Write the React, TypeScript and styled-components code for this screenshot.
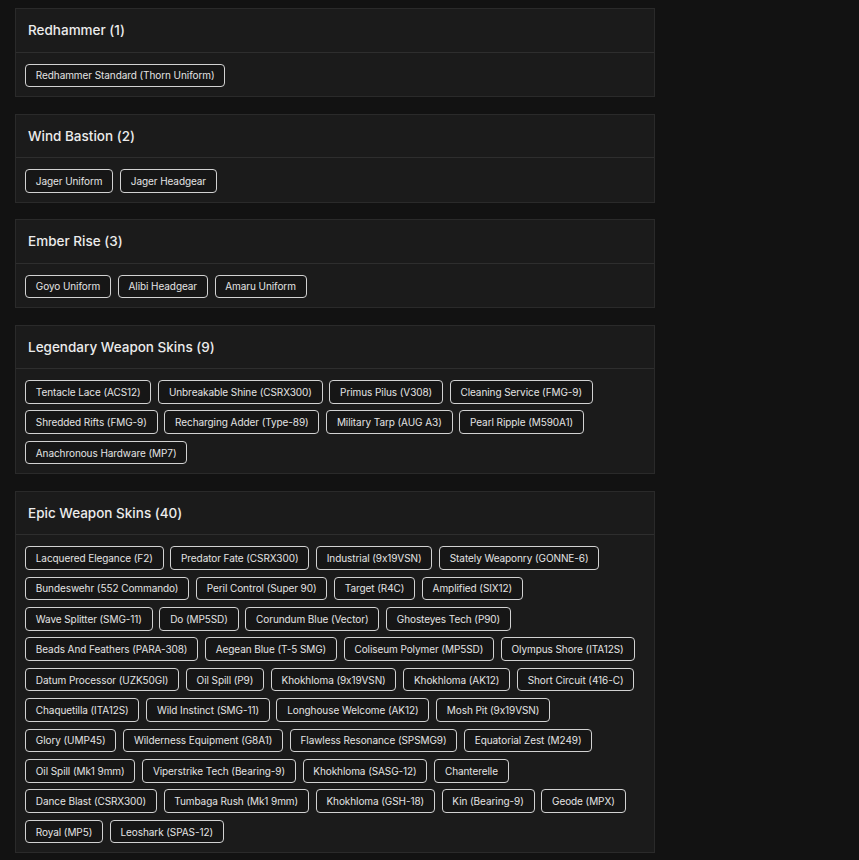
import React from "react";
import styled, { createGlobalStyle } from "styled-components";

const GlobalStyle = createGlobalStyle`
  html, body {
    margin: 0;
    padding: 0;
    background: #121212;
  }
  body {
    font-family: "Inter", "Open Sans", "Liberation Sans", sans-serif;
    font-feature-settings: "calt" 0;
    color: #e6e6e6;
  }
`;

const Page = styled.div`
  display: flex;
  flex-direction: column;
  gap: 16.5px;
  padding: 8px 204px 8px 15px;
`;

const Card = styled.section`
  background: #1b1b1b;
  border: 1px solid #2a2a2a;
`;

const CardHeader = styled.header`
  height: 42.5px;
  display: flex;
  align-items: center;
  padding: 0 12px;
  border-bottom: 1px solid #2e2e2e;
`;

const Title = styled.h2`
  margin: 0;
  font-size: 13.5px;
  font-weight: 500;
  color: #ececec;
`;

const ChipList = styled.div`
  display: flex;
  flex-wrap: wrap;
  gap: 6.9px 6.7px;
  padding: 11px 13px 9px 9px;
`;

const Chip = styled.span`
  display: inline-flex;
  align-items: center;
  height: 23.5px;
  box-sizing: border-box;
  padding: 0 9.8px;
  border: 1px solid #d2d2d2;
  border-radius: 4px;
  background: #161616;
  font-size: 10px;
  letter-spacing: -0.08px;
  color: #e4e4e4;
  white-space: nowrap;
`;

const groups: { title: string; items: string[] }[] = [
  { title: "Redhammer", items: ["Redhammer Standard (Thorn Uniform)"] },
  { title: "Wind Bastion", items: ["Jager Uniform", "Jager Headgear"] },
  { title: "Ember Rise", items: ["Goyo Uniform", "Alibi Headgear", "Amaru Uniform"] },
  {
    title: "Legendary Weapon Skins",
    items: [
      "Tentacle Lace (ACS12)",
      "Unbreakable Shine (CSRX300)",
      "Primus Pilus (V308)",
      "Cleaning Service (FMG-9)",
      "Shredded Rifts (FMG-9)",
      "Recharging Adder (Type-89)",
      "Military Tarp (AUG A3)",
      "Pearl Ripple (M590A1)",
      "Anachronous Hardware (MP7)",
    ],
  },
  {
    title: "Epic Weapon Skins",
    items: [
      "Lacquered Elegance (F2)",
      "Predator Fate (CSRX300)",
      "Industrial (9x19VSN)",
      "Stately Weaponry (GONNE-6)",
      "Bundeswehr (552 Commando)",
      "Peril Control (Super 90)",
      "Target (R4C)",
      "Amplified (SIX12)",
      "Wave Splitter (SMG-11)",
      "Do (MP5SD)",
      "Corundum Blue (Vector)",
      "Ghosteyes Tech (P90)",
      "Beads And Feathers (PARA-308)",
      "Aegean Blue (T-5 SMG)",
      "Coliseum Polymer (MP5SD)",
      "Olympus Shore (ITA12S)",
      "Datum Processor (UZK50GI)",
      "Oil Spill (P9)",
      "Khokhloma (9x19VSN)",
      "Khokhloma (AK12)",
      "Short Circuit (416-C)",
      "Chaquetilla (ITA12S)",
      "Wild Instinct (SMG-11)",
      "Longhouse Welcome (AK12)",
      "Mosh Pit (9x19VSN)",
      "Glory (UMP45)",
      "Wilderness Equipment (G8A1)",
      "Flawless Resonance (SPSMG9)",
      "Equatorial Zest (M249)",
      "Oil Spill (Mk1 9mm)",
      "Viperstrike Tech (Bearing-9)",
      "Khokhloma (SASG-12)",
      "Chanterelle",
      "Dance Blast (CSRX300)",
      "Tumbaga Rush (Mk1 9mm)",
      "Khokhloma (GSH-18)",
      "Kin (Bearing-9)",
      "Geode (MPX)",
      "Royal (MP5)",
      "Leoshark (SPAS-12)",
    ],
  },
];

export default function App() {
  return (
    <>
      <GlobalStyle />
      <Page>
        {groups.map((g) => (
          <Card key={g.title}>
            <CardHeader>
              <Title>
                {g.title} ({g.items.length})
              </Title>
            </CardHeader>
            <ChipList>
              {g.items.map((it, i) => (
                <Chip key={i}>{it}</Chip>
              ))}
            </ChipList>
          </Card>
        ))}
      </Page>
    </>
  );
}
